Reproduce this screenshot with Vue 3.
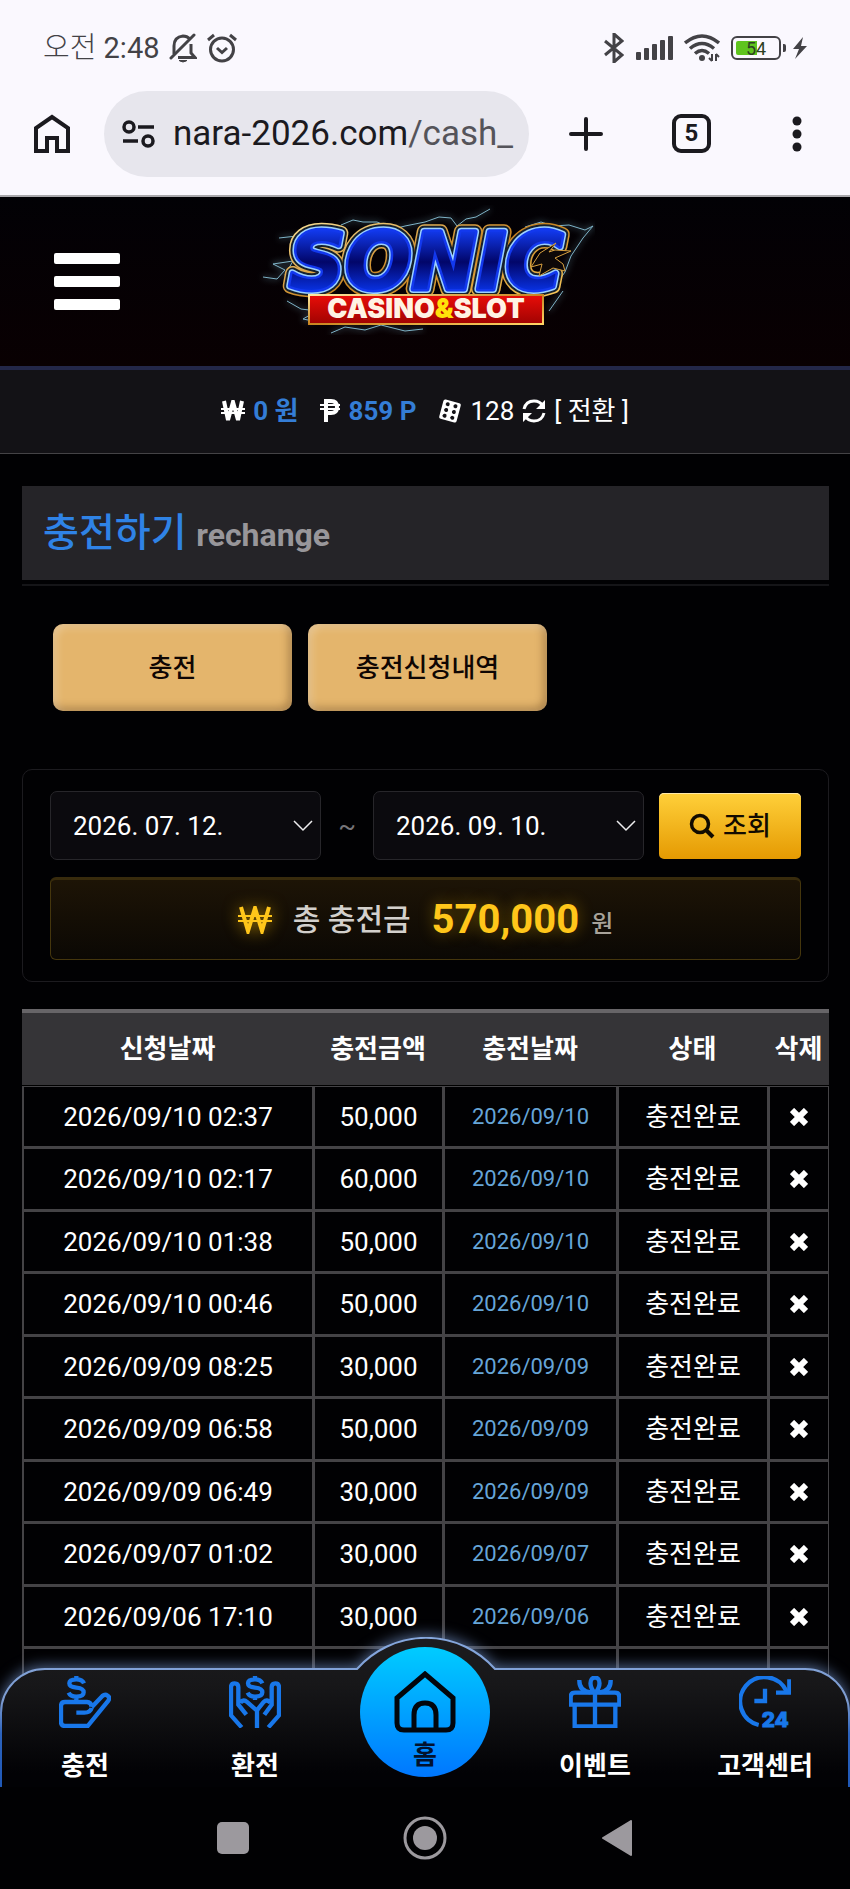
<template>
  <div class="screen">
    <header class="status-bar">
      <div class="status-left">
        <span class="clock"><span class="meridiem">오전</span> 2:48</span>
        <svg width="28" height="30" viewBox="0 0 28 30" fill="none" stroke="#434246" stroke-width="3">
          <path d="M5 21V13q0-9 9-10q4 0 7 3M22 11v9l4 4.500H9" />
          <path d="M2 25L25 2" stroke-linecap="round" />
          <path d="M10 27.500h8q-4 3-8 0z" fill="#434246" stroke-width="1" />
        </svg>
        <svg width="32" height="30" viewBox="0 0 32 30" fill="none" stroke="#434246" stroke-width="3">
          <circle cx="16" cy="16.500" r="11.500" />
          <path d="M2 7L8 2M30 7L24 2M11 15l5 4.500l5-4.500" />
        </svg>
      </div>
      <div class="status-right">
        <svg width="20" height="30" viewBox="0 0 20 30" fill="none" stroke="#434246" stroke-width="3">
          <path d="M1 8l17 14l-8 7V1l8 7L1 22" />
        </svg>
        <svg width="38" height="24" viewBox="0 0 38 24" fill="#434246">
          <rect v-for="bar in 5" :key="bar" :x="(bar - 1) * 8 + 1" :y="20 - bar * 4" width="5" :height="4 + bar * 4" rx="1" />
        </svg>
        <svg width="36" height="28" viewBox="0 0 36 28" fill="none" stroke="#434246" stroke-width="3.500">
          <path d="M1 9q17-14 34 0M6 14.500q12-10 24 0M11 19.500q7-6 14 0" />
          <circle cx="18" cy="24" r="3" fill="#434246" stroke="none" />
          <path d="M28 20v7M32 20v7" stroke-width="2" />
          <path d="M25 24l3 3M35 23l-3-3" stroke-width="2" />
        </svg>
        <div class="battery">
          <span class="battery-level">54</span>
        </div>
        <svg width="16" height="22" viewBox="0 0 16 22" fill="#434246">
          <path d="M11 0L1 12h6L3 22L15 9H9z" />
        </svg>
      </div>
    </header>

    <nav class="browser-bar">
      <button class="browser-btn start" aria-label="홈 페이지">
        <svg width="36" height="40" viewBox="0 0 36 40" fill="none" stroke="#1b1a1f" stroke-width="4">
          <path d="M2 37V14L18 3l16 11v23H23V24H13v13z" />
        </svg>
      </button>
      <div class="address">
        <svg width="34" height="28" viewBox="0 0 34 28" fill="none" stroke="#1b1a1f" stroke-width="3.500">
          <circle cx="7" cy="7" r="5" />
          <circle cx="26" cy="21" r="5" />
          <path d="M16 7h16M1 21h15" />
        </svg>
        <span class="url">nara-2026.com<span class="url-path">/cash_</span></span>
      </div>
      <button class="browser-btn" aria-label="새 탭">
        <svg width="36" height="36" viewBox="0 0 36 36" stroke="#1b1a1f" stroke-width="4" stroke-linecap="round">
          <path d="M18 3v30M3 18h30" />
        </svg>
      </button>
      <button class="browser-btn tab-count"><span>5</span></button>
      <button class="browser-btn" aria-label="메뉴">
        <svg width="10" height="36" viewBox="0 0 10 36" fill="#1b1a1f">
          <circle cx="5" cy="5" r="4.500" />
          <circle cx="5" cy="18" r="4.500" />
          <circle cx="5" cy="31" r="4.500" />
        </svg>
      </button>
    </nav>

    <div class="page">
      <div class="scroll">
        <div class="top-header">
          <button class="menu-btn" aria-label="메뉴"><i></i><i></i><i></i></button>
          <svg class="logo" width="340" height="130" viewBox="0 0 340 130" role="img" aria-label="SONIC CASINO&SLOT">
            <defs>
              <linearGradient id="letterFill" x1="0" y1="0" x2="0" y2="1">
                <stop offset="0.1" stop-color="#1440ff" />
                <stop offset="0.5" stop-color="#020669" />
                <stop offset="0.9" stop-color="#0a3cff" />
              </linearGradient>
              <linearGradient id="goldLine" x1="0" y1="0" x2="1" y2="1">
                <stop offset="0" stop-color="#ffe9a0" />
                <stop offset="0.5" stop-color="#c98420" />
                <stop offset="1" stop-color="#ffd466" />
              </linearGradient>
              <linearGradient id="bandFill" x1="0" y1="0" x2="0" y2="1">
                <stop offset="0" stop-color="#e90d08" />
                <stop offset="1" stop-color="#a00302" />
              </linearGradient>
              <filter id="spark" x="-20%" y="-40%" width="140%" height="180%">
                <feGaussianBlur stdDeviation="3" />
                <feMerge>
                  <feMergeNode />
                  <feMergeNode in="SourceGraphic" />
                </feMerge>
              </filter>
            </defs>
            <g filter="url(#spark)" fill="none" stroke="#7fb4c8" stroke-width="1">
              <path d="M86 20l12-5l10 2l14 0l12 5M124 28l26-7l20-4l14-5l12 1l6 8l9-7l10-2l14-8" />
              <path d="M270 22l16-5l12 4l16-1l16 5l8-4l-10 12l-12 18l-6 16l-10 14" />
              <path d="M8 72l14 2l8-9l-12-6l20-3l-8 14l10 8M24 33l18-2l10 4M32 96l14 8l16 2l-14 8l10 2" />
              <path d="M76 128l14-6l20 3l16-5l24 6l18-2M308 86l-14 20" />
            </g>
            <g class="logo-word" stroke-linejoin="round">
              <use href="#word" stroke="url(#goldLine)" stroke-width="15" />
              <use href="#word" stroke="#14202c" stroke-width="12" />
              <use href="#word" stroke="#9cd0ff" stroke-width="8" />
              <g stroke="#1238ee" stroke-width="5" fill="url(#letterFill)">
                <text id="word" x="34" y="84">SONIC</text>
              </g>
              <use href="#word" fill="url(#letterFill)" />
            </g>
            <path d="M316 46l-16-1l-6 2l7-9l-16 10l-9 14l11-3l-3 12l14-8l12 3l-2-7l-8-6z" fill="#0d0808" stroke="#d6a040" stroke-width="1" />
            <rect x="54" y="90" width="234" height="29" fill="url(#bandFill)" stroke="url(#goldLine)" stroke-width="2" />
            <text class="logo-band" x="171" y="113" text-anchor="middle">CASINO<tspan fill="#ffe10a">&amp;</tspan>SLOT</text>
          </svg>
        </div>

        <div class="balance-bar">
          <span class="balance">
            <svg width="24" height="22" viewBox="0 0 24 22" fill="none" stroke="#fff">
              <path d="M3 1l4 19l5-18l5 18l4-19" stroke-width="4" />
              <path d="M0 9h24M0 13h24" stroke-width="2" />
            </svg>
            <b>0 원</b>
          </span>
          <span class="balance">
            <svg width="20" height="23" viewBox="0 0 20 23" fill="none" stroke="#fff">
              <path d="M6 23V2h5q6 0 6 6t-6 6H6" stroke-width="4" />
              <path d="M0 6h20M0 10h20" stroke-width="2" />
            </svg>
            <b>859 P</b>
          </span>
          <span class="balance">
            <svg width="24" height="24" viewBox="0 0 24 24">
              <g transform="rotate(15 12 12)">
                <rect x="3" y="2" width="18" height="20" rx="2" fill="#fff" />
                <g fill="#131216">
                  <circle cx="8" cy="6" r="2" />
                  <circle cx="16" cy="6" r="2" />
                  <circle cx="8" cy="12" r="2" />
                  <circle cx="16" cy="12" r="2" />
                  <circle cx="8" cy="18" r="2" />
                  <circle cx="16" cy="18" r="2" />
                </g>
              </g>
            </svg>
            128
          </span>
          <a class="convert" href="#">
            <svg width="24" height="24" viewBox="0 0 24 24" fill="none" stroke="#fff" stroke-width="3">
              <path d="M2 10Q4 2 12 2q6 0 9 5M22 14q-2 8-10 8q-6 0-9-5" />
              <path d="M23 1v9h-9zM1 23v-9h9z" fill="#fff" stroke="none" />
            </svg>
            <span>[ 전환 ]</span>
          </a>
        </div>

        <main class="content">
          <h1 class="title">충전하기 <small>rechange</small></h1>

          <div class="actions">
            <button class="gold-btn">충전</button>
            <button class="gold-btn">충전신청내역</button>
          </div>

          <section class="filter">
            <form class="filter-row" @submit.prevent>
              <div class="date-field">
                <select v-model="startDate" aria-label="시작일">
                  <option>2026. 07. 12.</option>
                </select>
                <svg width="20" height="12" viewBox="0 0 20 12" fill="none" stroke="#ededee" stroke-width="1.500"><path d="M1 1l9 9l9-9" /></svg>
              </div>
              <span class="tilde">~</span>
              <div class="date-field">
                <select v-model="endDate" aria-label="종료일">
                  <option>2026. 09. 10.</option>
                </select>
                <svg width="20" height="12" viewBox="0 0 20 12" fill="none" stroke="#ededee" stroke-width="1.500"><path d="M1 1l9 9l9-9" /></svg>
              </div>
              <button class="search-btn" type="submit">
                <svg width="26" height="26" viewBox="0 0 26 26" fill="none" stroke="#120b00" stroke-width="3.500">
                  <circle cx="11" cy="11" r="8.500" />
                  <path d="M17 17l7 7" stroke-width="4" />
                </svg>
                조회
              </button>
            </form>
            <div class="total">
              <svg width="34" height="28" viewBox="0 0 34 28" fill="none" stroke="#ffc61a">
                <path d="M3 1l7 24l7-23l7 23l7-24" stroke-width="4" />
                <path d="M0 10h34M0 15h34" stroke-width="2" />
              </svg>
              <span class="total-label">총 충전금</span>
              <strong>570,000</strong>
              <span class="unit">원</span>
            </div>
          </section>

          <table class="history">
            <colgroup>
              <col class="col-request" />
              <col class="col-amount" />
              <col class="col-date" />
              <col class="col-state" />
              <col class="col-delete" />
            </colgroup>
            <thead>
              <tr>
                <th v-for="name in columns" :key="name">{{ name }}</th>
              </tr>
            </thead>
            <tbody>
              <tr v-for="row in rows" :key="row.requested">
                <td>{{ row.requested }}</td>
                <td>{{ row.amount }}</td>
                <td class="charged">{{ row.requested.slice(0, 10) }}</td>
                <td class="state">충전완료</td>
                <td>
                  <button class="delete-btn" aria-label="삭제">
                    <svg width="18" height="18" viewBox="0 0 18 18" stroke="#fff" stroke-width="6"><path d="M2 2l14 14M16 2L2 16" /></svg>
                  </button>
                </td>
              </tr>
              <tr>
                <td v-for="name in columns" :key="name"></td>
              </tr>
            </tbody>
          </table>
        </main>
      </div>

      <nav class="dock">
        <svg class="dock-shape" viewBox="0 0 850 150" preserveAspectRatio="none">
          <defs>
            <linearGradient id="dockFill" x1="0" y1="0" x2="0" y2="1">
              <stop offset="0" stop-color="#1c1c1f" />
              <stop offset="0.3" stop-color="#171719" />
              <stop offset="0.85" stop-color="#020205" />
            </linearGradient>
            <linearGradient id="dockLine" x1="0" y1="0" x2="0" y2="1">
              <stop offset="0" stop-color="#86a8de" />
              <stop offset="0.4" stop-color="#7c9bd0" />
              <stop offset="0.6" stop-color="#2c63bd" />
              <stop offset="1" stop-color="#1d56b5" />
            </linearGradient>
          </defs>
          <path d="M1 160V76A44 44 0 0 1 45 32H357A92 92 0 0 1 495 32H805A44 44 0 0 1 849 76V160z" fill="url(#dockFill)" stroke="url(#dockLine)" stroke-width="2" />
        </svg>

        <a class="dock-item" href="#">
          <svg width="52" height="52" viewBox="0 0 156 156">
            <path d="M75 22Q70 10 52 10Q31 10 31 22Q31 33 52 35Q74 37 74 49Q74 62 52 62Q34 62 29 50M52 0v10M52 62v16" />
            <path d="M52 110h24q18 0 22-14M98 92q-2-14-14-14H18q-12 0-12 12v48q0 12 12 12h68l62-76q6-9-2-15t-16 1L98 94" />
          </svg>
          <span>충전</span>
        </a>
        <a class="dock-item" href="#">
          <svg width="52" height="52" viewBox="0 0 156 156">
            <path d="M100 22Q95 10 78 10Q57 10 57 22Q57 33 78 35Q100 37 100 49Q100 62 78 62Q61 62 56 50M78 0v10M78 62v10" />
            <path d="M38 154L6 118V34q0-12 11-12t11 12v52l24 30M34 80q10-12 20-2l30 26v52" />
            <path d="M118 154l32-36V34q0-12-11-12t-11 12v52l-22 30M124 80q-10-12-20-2l-21 26" />
          </svg>
          <span>환전</span>
        </a>
        <a class="dock-item home" href="#">
          <span class="home-disc">
            <svg width="62" height="62" viewBox="0 0 62 62">
              <path d="M3 27L31 3l28 24v25q0 7-7 7H10q-7 0-7-7z" />
              <path d="M20 58V44q0-12 11-12t11 12v14" />
            </svg>
            <span>홈</span>
          </span>
        </a>
        <a class="dock-item" href="#">
          <svg width="52" height="52" viewBox="0 0 156 156">
            <path d="M18 50h120q13 0 13 13v23H5V63q0-13 13-13zM17 86h122v65H17zM78 50v101" />
            <path d="M78 50C60 34 60 5 78 5S96 34 78 50M31 12q-1 34 34 37M125 12q1 34-34 37" />
          </svg>
          <span>이벤트</span>
        </a>
        <a class="dock-item" href="#">
          <svg width="52" height="52" viewBox="0 0 156 156">
            <path d="M59 147A73 73 0 1 1 143 46" />
            <path d="M151 10v40h-40M78 38v37H46" />
            <text x="68" y="152">24</text>
          </svg>
          <span>고객센터</span>
        </a>
      </nav>
    </div>

    <footer class="system-nav">
      <button aria-label="최근 앱">
        <svg width="32" height="32" viewBox="0 0 32 32" fill="#9c999e"><rect width="32" height="32" rx="5" /></svg>
      </button>
      <button aria-label="홈 화면">
        <svg width="44" height="44" viewBox="0 0 44 44" fill="#9c999e">
          <circle cx="22" cy="22" r="20" fill="none" stroke="#9c999e" stroke-width="3" />
          <circle cx="22" cy="22" r="12" />
        </svg>
      </button>
      <button aria-label="뒤로">
        <svg width="32" height="36" viewBox="0 0 32 36" fill="#9c999e" stroke="#9c999e" stroke-width="2" stroke-linejoin="round"><path d="M2 18L30 1v34z" /></svg>
      </button>
    </footer>
  </div>
</template>

<script setup>
import { ref } from 'vue'

const startDate = ref('2026. 07. 12.')
const endDate = ref('2026. 09. 10.')

const columns = ['신청날짜', '충전금액', '충전날짜', '상태', '삭제']

const rows = [
  { requested: '2026/09/10 02:37', amount: '50,000' },
  { requested: '2026/09/10 02:17', amount: '60,000' },
  { requested: '2026/09/10 01:38', amount: '50,000' },
  { requested: '2026/09/10 00:46', amount: '50,000' },
  { requested: '2026/09/09 08:25', amount: '30,000' },
  { requested: '2026/09/09 06:58', amount: '50,000' },
  { requested: '2026/09/09 06:49', amount: '30,000' },
  { requested: '2026/09/07 01:02', amount: '30,000' },
  { requested: '2026/09/06 17:10', amount: '30,000' },
]
</script>

<style>
body {
  margin: 0;
  background: #000;
}
</style>

<style scoped>
* {
  box-sizing: border-box;
}
.screen {
  display: flex;
  flex-direction: column;
  height: 100vh;
  background: #010103;
  color: #fff;
  font-family: Roboto, "Noto Sans CJK KR", sans-serif;
  font-size: 26px;
  line-height: 36px;
}
button,
select {
  font: inherit;
  color: inherit;
  border: none;
  background: none;
  padding: 0;
  cursor: pointer;
}
a {
  color: inherit;
  text-decoration: none;
}
svg {
  display: block;
  flex: none;
}

/* phone status bar */
.status-bar {
  display: flex;
  justify-content: space-between;
  align-items: center;
  height: 90px;
  padding: 6px 42px 0 43px;
  background: #faf8fe;
  color: #434246;
}
.status-left,
.status-right {
  display: flex;
  align-items: center;
  gap: 11px;
}
.status-left {
  gap: 9px;
}
.clock {
  font-size: 29px;
  font-weight: 400;
}
.meridiem {
  font-weight: 300;
}
.battery {
  position: relative;
  width: 50px;
  height: 24px;
  padding: 3px;
  border: 2px solid #434246;
  border-radius: 6px;
}
.battery::after {
  content: "";
  position: absolute;
  right: -7px;
  top: 6px;
  width: 3px;
  height: 8px;
  border-radius: 0 2px 2px 0;
  background: #434246;
}
.battery-level {
  display: block;
  height: 14px;
  border-radius: 2px;
  background: linear-gradient(90deg, #5fc41e 52%, transparent 52%);
  font-size: 18px;
  font-weight: 400;
  line-height: 15px;
  text-align: center;
  color: #2c4022;
}

/* browser toolbar */
.browser-bar {
  display: flex;
  align-items: center;
  height: 107px;
  padding-bottom: 18px;
  background: #faf8fe;
  border-bottom: 2px solid #a9a8ac;
  color: #1b1a1f;
}
.browser-btn {
  flex: 1;
  display: flex;
  justify-content: center;
}
.browser-btn.start {
  flex: none;
  width: 104px;
}
.address {
  flex: none;
  display: flex;
  align-items: center;
  gap: 17px;
  width: 50%;
  height: 86px;
  margin-right: 4px;
  padding-left: 18px;
  border-radius: 43px;
  background: #e7e6ed;
  white-space: nowrap;
}
.url {
  font-size: 35px;
}
.url-path {
  color: #55545a;
}
.tab-count span {
  width: 39px;
  height: 39px;
  border: 4px solid #1b1a1f;
  border-radius: 9px;
  font-size: 24px;
  font-weight: 700;
  line-height: 31px;
}

/* page */
.page {
  position: relative;
  flex: 1;
  min-height: 0;
}
.scroll {
  height: 100%;
  overflow: auto;
  scrollbar-width: none;
}
.top-header {
  display: grid;
  grid-template-columns: 1fr auto 1fr;
  align-items: center;
  height: 173px;
  padding: 0 54px;
  background: linear-gradient(#020105, #090002);
  border-bottom: 4px solid #232748;
}
.menu-btn {
  display: flex;
  flex-direction: column;
  gap: 12px;
  width: 66px;
}
.menu-btn i {
  height: 11px;
  border-radius: 2px;
  background: #fff;
}
.logo {
  align-self: start;
  margin-top: 8px;
}
.logo-word {
  fill: none;
  font-family: "DejaVu Sans", sans-serif;
  font-size: 78px;
  font-weight: 700;
  font-style: italic;
}
.logo-band {
  font-family: Inter, sans-serif;
  font-size: 27px;
  font-weight: 900;
  fill: #fff3e4;
}
.balance-bar {
  display: flex;
  justify-content: center;
  align-items: center;
  height: 84px;
  padding-bottom: 2px;
  background: #131216;
  border-bottom: 1px solid #444346;
}
.balance {
  display: flex;
  align-items: center;
  gap: 8px;
  margin-right: 22px;
}
.balance:nth-child(3) {
  margin-right: 8px;
}
.balance b {
  color: #347dd6;
}
.convert {
  display: flex;
  align-items: center;
  gap: 8px;
}

.content {
  padding: 32px 21px 0 22px;
}
.title {
  height: 94px;
  margin: 0 0 44px;
  padding: 0 21px;
  background: #252428;
  box-shadow: 0 4px #010103, 0 6px #151518;
  color: #2f83e6;
  font-size: 39px;
  font-weight: 500;
  line-height: 94px;
}
.title small {
  color: #98969a;
  font-size: 32px;
  font-weight: 700;
}
.actions {
  display: flex;
  gap: 16px;
  padding: 0 31px;
}
.gold-btn {
  width: 239px;
  height: 87px;
  border-radius: 10px;
  background: #e4b56c;
  box-shadow: inset 3px 3px 8px rgba(255, 255, 255, 0.3), inset -3px -3px 8px rgba(60, 30, 0, 0.35);
  color: #0f0603;
  font-weight: 500;
}

/* search box */
.filter {
  margin-top: 58px;
  padding: 21px 27px;
  border: 1px solid #1c1b1f;
  border-radius: 10px;
}
.filter-row {
  display: flex;
  align-items: center;
}
.date-field {
  position: relative;
  flex: 1;
}
.date-field select {
  appearance: none;
  width: 100%;
  height: 69px;
  padding: 0 22px;
  border: 1px solid #27262a;
  border-radius: 7px;
  background: #0b0a0e;
}
.date-field svg {
  position: absolute;
  right: 8px;
  top: 29px;
  pointer-events: none;
}
.tilde {
  width: 52px;
  text-align: center;
  color: #77757a;
}
.search-btn {
  display: flex;
  justify-content: center;
  align-items: center;
  gap: 8px;
  width: 142px;
  height: 66px;
  margin-left: 15px;
  border-radius: 5px;
  background: linear-gradient(#ffd03a, #e59a02);
  box-shadow: inset 0 1px #ffe9a8;
  color: #120b00;
  font-weight: 500;
}
.total {
  display: flex;
  justify-content: center;
  align-items: center;
  height: 83px;
  margin-top: 17px;
  border: 1px solid #45360d;
  border-top: 3px solid #382b0d;
  border-radius: 6px;
  background: linear-gradient(#1d1406, #0b0804);
}
.total svg {
  filter: drop-shadow(0 0 8px rgba(255, 190, 0, 0.6));
}
.total-label {
  margin: 0 21px;
  color: #d3d0cc;
  font-size: 30px;
  font-weight: 500;
}
.total strong {
  color: #ffc61a;
  font-size: 40px;
  text-shadow: 0 0 16px rgba(255, 190, 0, 0.4);
}
.unit {
  margin-left: 12px;
  padding-top: 8px;
  color: #a8a39a;
  font-size: 24px;
  font-weight: 500;
}

/* history table */
.history {
  width: 100%;
  margin-top: 27px;
  border-spacing: 0;
  table-layout: fixed;
  text-align: center;
}
.col-amount {
  width: 130px;
}
.col-date {
  width: 174px;
}
.col-state {
  width: 151px;
}
.col-delete {
  width: 61px;
}
.history th {
  height: 77px;
  padding: 0;
  border-top: 4px solid #676568;
  border-bottom: 1px solid #000;
  background: #353437;
  white-space: nowrap;
}
.history td {
  height: 62px;
  padding: 0;
  border: solid #444346;
  border-width: 1px 1px 2px 2px;
}
.history tr:nth-child(even) td {
  height: 63px;
}
.history .charged {
  color: #66a5d8;
  font-size: 22px;
}
.delete-btn {
  display: block;
  margin: 0 auto;
}

/* bottom menu over the page */
.dock {
  position: absolute;
  left: 0;
  right: 0;
  bottom: 0;
  display: grid;
  grid-template-columns: repeat(5, 1fr);
  height: 150px;
}
.dock-shape {
  position: absolute;
  inset: 0;
  width: 100%;
  height: 100%;
  filter: drop-shadow(0 -2px 7px rgba(130, 165, 225, 0.6));
  clip-path: inset(-30px 0 0 0);
}
.dock-item {
  position: relative;
  display: flex;
  flex-direction: column;
  align-items: center;
  gap: 20px;
  padding-top: 39px;
  font-weight: 700;
}
.dock-item svg {
  fill: none;
  stroke: #1877ea;
  stroke-width: 13px;
}
.dock-item text {
  fill: #1877ea;
  stroke-width: 3px;
  font-family: Inter, sans-serif;
  font-size: 62px;
  font-weight: 800;
}
.home {
  padding-top: 10px;
}
.home-disc {
  display: flex;
  flex-direction: column;
  align-items: center;
  width: 130px;
  height: 130px;
  padding-top: 24px;
  border-radius: 50%;
  background: linear-gradient(#00ccff, #0077ff);
  color: #02122e;
}
.home-disc svg {
  stroke: #02060c;
  stroke-width: 5px;
}
.home-disc span {
  line-height: 44px;
}

.system-nav {
  display: flex;
  justify-content: center;
  height: 102px;
  background: #010103;
}
.system-nav button {
  display: flex;
  justify-content: center;
  align-items: center;
  width: 192px;
}
</style>
